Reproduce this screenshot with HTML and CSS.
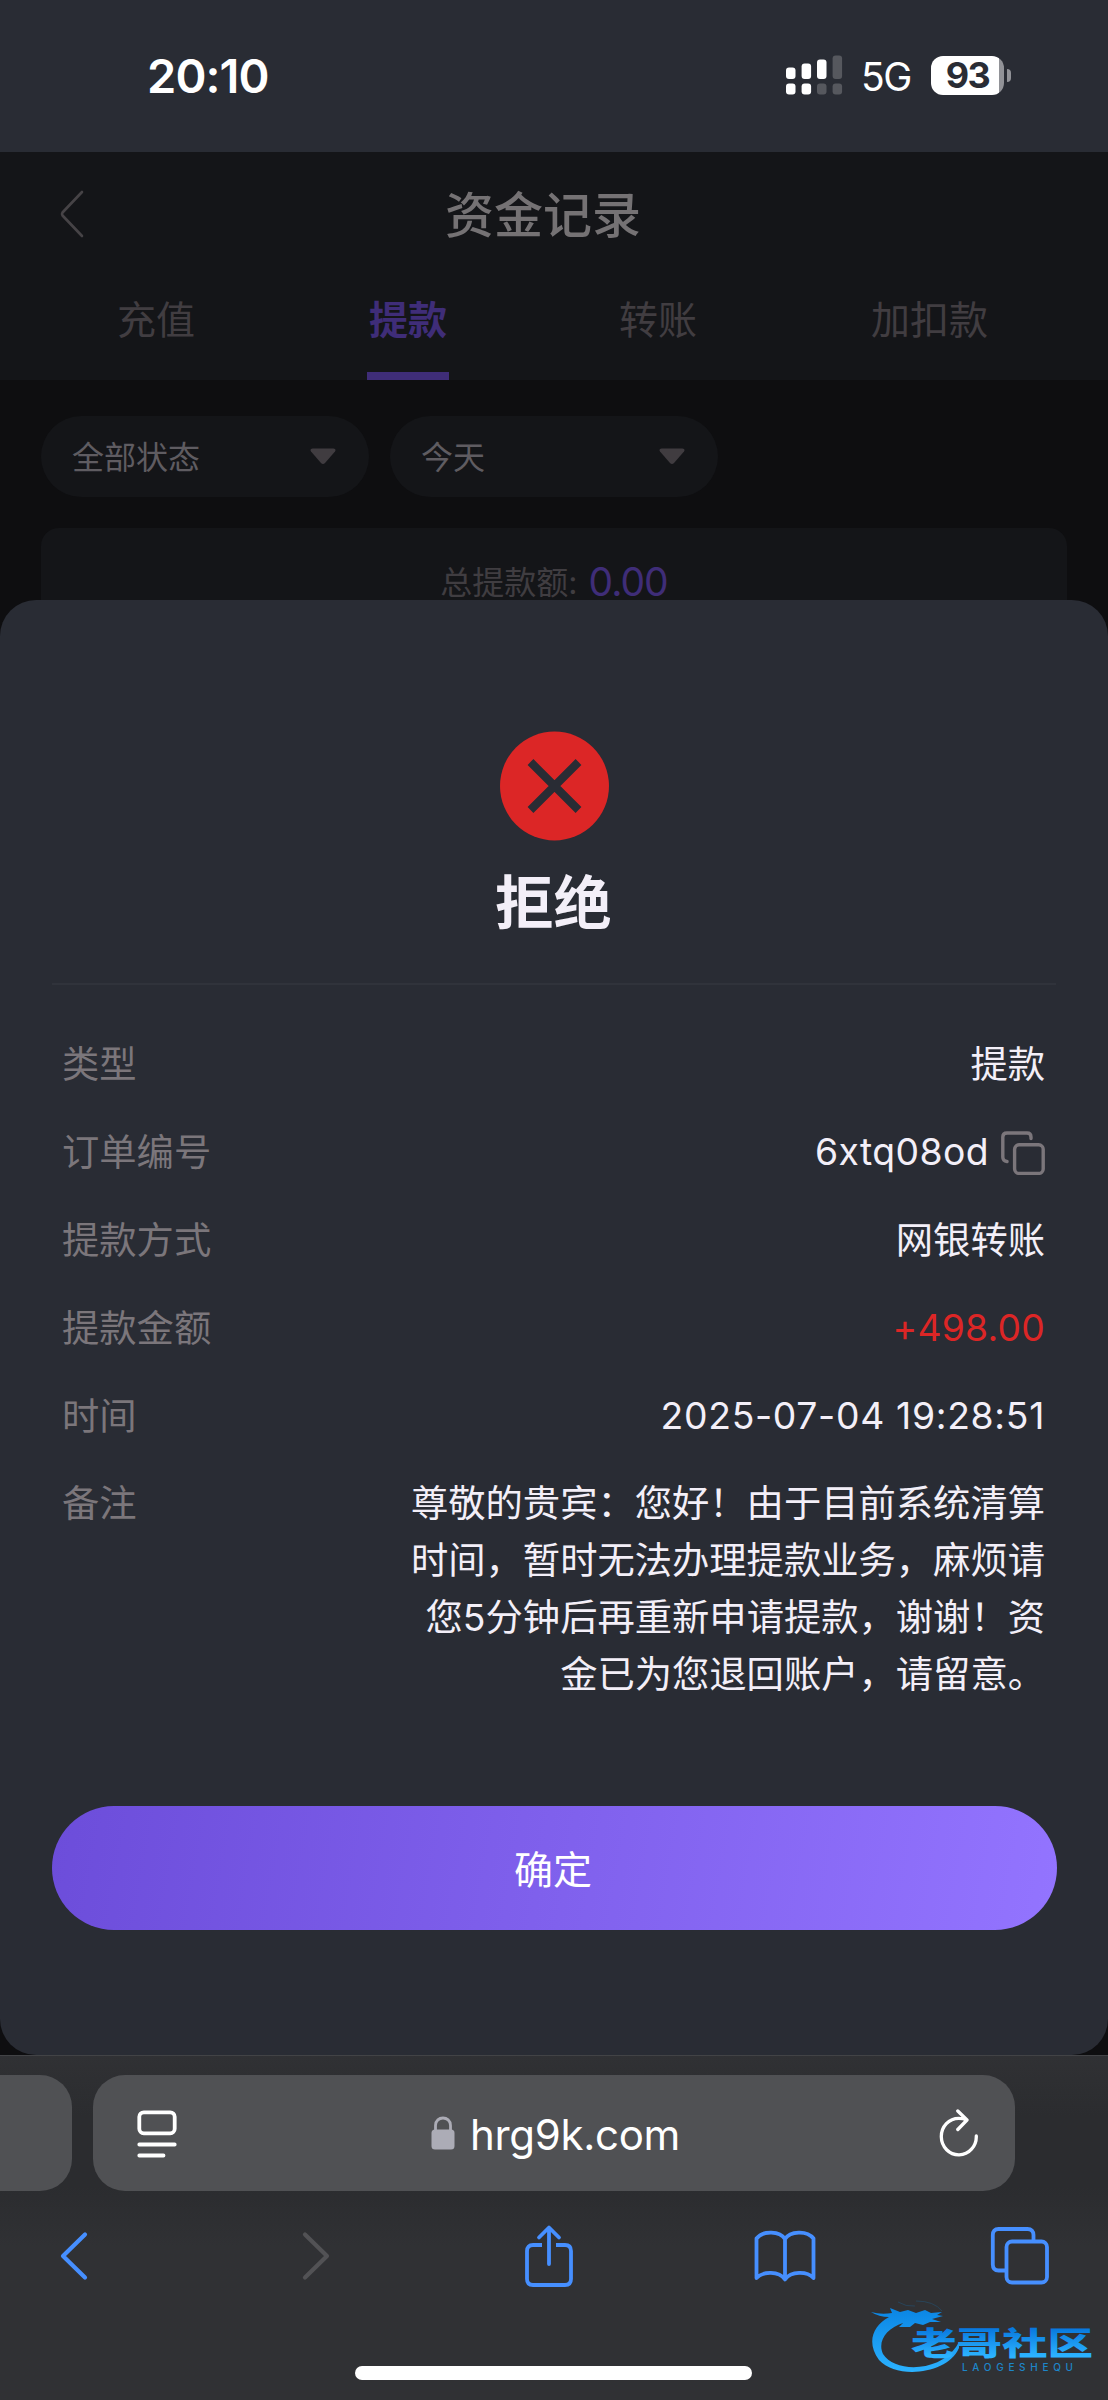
FILE: index.html
```html
<!DOCTYPE html>
<html lang="zh-CN">
<head>
<meta charset="utf-8">
<title>资金记录</title>
<link rel="stylesheet" href="styles.css">
</head>
<body>
<div class="phone">
  <header class="status">
    <span class="status-time">20:10</span>
    <div class="status-right">
      <svg class="signal" width="57" height="40" viewBox="0 0 57 40" fill="#fff">
        <rect x="0" y="12.500" width="9.500" height="11.500" rx="3"/>
        <rect x="15.600" y="8.500" width="9.500" height="15.500" rx="3"/>
        <rect x="31" y="4.500" width="9.500" height="19.500" rx="3"/>
        <rect x="46.600" y="0.500" width="9.500" height="23.500" rx="3" fill="#56585e"/>
        <rect x="0" y="28.500" width="9.500" height="11" rx="3"/>
        <rect x="15.600" y="28.500" width="9.500" height="11" rx="3"/>
        <rect x="31" y="28.500" width="9.500" height="11" rx="3" fill="#56585e"/>
        <rect x="46.600" y="28.500" width="9.500" height="11" rx="3" fill="#56585e"/>
      </svg>
      <span class="network">5G</span>
      <div class="battery"><span class="battery-body">93</span><span class="battery-cap"></span></div>
    </div>
  </header>

  <main class="screen">
    <div class="topbar">
      <div class="nav">
        <svg class="nav-back" width="26" height="50" viewBox="0 0 26 50" fill="none" stroke="#464346" stroke-width="2.600" stroke-linecap="round" stroke-linejoin="round"><path d="M23 3 3.500 23.500Q2.500 25 3.500 26.500L23 47"/></svg>
        <h1 class="nav-title">资金记录</h1>
      </div>
      <nav class="tabs">
        <span class="tab">充值</span>
        <span class="tab tab-active">提款</span>
        <span class="tab">转账</span>
        <span class="tab">加扣款</span>
      </nav>
    </div>
    <div class="filters">
      <div class="filter"><span>全部状态</span><svg width="26" height="17" viewBox="0 0 26 17"><path fill="#403c40" d="M2.500 0.500h21q3 .5 1.500 3L15 15q-2 2-4 0L1 3.500Q-.5 1 2.500.5z"/></svg></div>
      <div class="filter"><span>今天</span><svg width="26" height="17" viewBox="0 0 26 17"><path fill="#403c40" d="M2.500 0.500h21q3 .5 1.500 3L15 15q-2 2-4 0L1 3.500Q-.5 1 2.500.5z"/></svg></div>
    </div>
    <div class="summary"><span>总提款额:</span><span class="summary-value">0.00</span></div>

    <section class="sheet">
      <svg class="result-icon" width="110" height="110" viewBox="0 0 110 110"><circle cx="55.500" cy="55" r="54.500" fill="#dc2626"/><path d="M31.500 31 79.500 79M79.500 31 31.500 79" stroke="#292c34" stroke-width="8.200"/></svg>
      <h2 class="result-title">拒绝</h2>
      <dl class="details">
        <div class="row"><dt>类型</dt><dd>提款</dd></div>
        <div class="row"><dt>订单编号</dt><dd class="order"><span class="order-id">6xtq08od</span>
          <svg width="44" height="44" viewBox="0 0 44 44" fill="none" stroke="#7b767b" stroke-width="3.400" stroke-linecap="round"><rect x="13.600" y="13.800" width="28.600" height="28.600" rx="4.500"/><path d="M30 7.500V6q0-4-4-4H6Q1.800 2 1.800 6v20q0 4 4.200 4.500"/></svg></dd></div>
        <div class="row"><dt>提款方式</dt><dd>网银转账</dd></div>
        <div class="row"><dt>提款金额</dt><dd class="amount">+498.00</dd></div>
        <div class="row"><dt>时间</dt><dd class="time">2025-07-04 19:28:51</dd></div>
        <div class="row"><dt>备注</dt><dd class="note">尊敬的贵宾：您好！由于目前系统清算<br>时间，暂时无法办理提款业务，麻烦请<br>您5分钟后再重新申请提款，谢谢！资<br>金已为您退回账户，请留意。</dd></div>
      </dl>
      <button class="confirm">确定</button>
    </section>
  </main>

  <footer class="browser">
    <div class="address-row">
      <div class="address-prev"></div>
      <div class="address">
        <svg class="reader" width="40" height="48" viewBox="0 0 40 48" fill="none" stroke="#fff" stroke-width="3.800" stroke-linecap="round"><rect x="2.300" y="2.300" width="35.400" height="21" rx="4.500"/><path d="M2.300 34.500h35.400M2.300 45.500H26.500"/></svg>
        <div class="host">
          <svg width="24" height="34" viewBox="0 0 24 34"><rect x="0.500" y="13.500" width="23" height="20" rx="3.500" fill="#acacb6"/><path d="M4.500 15V9.500C4.500-.5 19.500-.5 19.500 9.500V15" fill="none" stroke="#acacb6" stroke-width="2.800"/></svg>
          <span class="host-name">hrg9k.com</span>
        </div>
        <svg width="42" height="48" viewBox="0 0 42 48" fill="none" stroke="#fff" stroke-width="3.300" stroke-linecap="round" stroke-linejoin="round"><path d="M38.300 27A17.500 18.300 0 1 1 20.800 9.300Q25 9.300 28.500 10.800M19.800 2 29 11 19.800 20.500"/></svg>
      </div>
    </div>
    <div class="toolbar">
      <svg width="30" height="52" viewBox="0 0 30 52" fill="none" stroke="#468fff" stroke-width="4.200" stroke-linecap="round"  stroke-linejoin="round"><path d="M26 4.500 4 26 26 47.500"/></svg>
      <svg width="30" height="52" viewBox="0 0 30 52" fill="none" stroke="#525255" stroke-width="4.200" stroke-linecap="round" stroke-linejoin="round"><path d="M4 4.500 26 26 4 47.500"/></svg>
      <svg width="50" height="64" viewBox="0 0 50 64" fill="none" stroke="#468fff" stroke-width="3.800" stroke-linecap="round" stroke-linejoin="round"><path d="M25 4V40M15 13.500 25 3.500 35 13.500"/><path stroke-linecap="butt" d="M18 21H9Q3 21 3 27V55Q3 61 9 61H41Q47 61 47 55V27Q47 21 41 21H32"/></svg>
      <svg width="64" height="54" viewBox="0 0 64 54" fill="none" stroke="#468fff" stroke-width="3.800" stroke-linecap="round" stroke-linejoin="round"><path d="M32 10C27 2 10 1 3.500 9.500V49C10 42 26 42 32 50.500C38 42 54 42 60.500 49V9.500C54 1 37 2 32 10V50"/></svg>
      <svg width="60" height="60" viewBox="0 0 60 60" fill="none" stroke="#468fff" stroke-width="3.800"><rect x="16.500" y="15.500" width="40.500" height="41" rx="5.500"/><path d="M43.500 15V9Q43.500 3 37.500 3H8.500Q2.800 3 2.800 9V38.500Q2.800 44.500 8.500 44.500H16"/></svg>
    </div>
    <div class="home-bar"></div>
    <svg class="watermark" width="230" height="84" viewBox="0 0 230 84">
      <defs>
        <linearGradient id="ring" x1="0" y1="0" x2="0" y2="1"><stop offset="0" stop-color="#0a85e4"/><stop offset="1" stop-color="#2bb2ff"/></linearGradient>
        <linearGradient id="word" gradientUnits="userSpaceOnUse" x1="0" y1="32" x2="0" y2="61"><stop offset="0" stop-color="#0675dc"/><stop offset="1" stop-color="#2cb3ff"/></linearGradient>
      </defs>
      <path fill="url(#ring)" d="M0 17Q10 20 21 18L19 13L29 17L37 15L45 18L54 15L60 18L71 17L66 20L72 21L61 24L70 27L59 27L52 30L44 28L39 32L28 32L32 28C16 33 6 46 12 59C24 78 68 77 85 52L88 47V53C77 79 26 85 8 65C-5 47 2 31 18 22Q8 22 0 17Z"/>
      <path fill="none" stroke="#235071" stroke-width="0.600" d="M27 7Q35 12 44 11M45 6Q63 6 71 16"/>
      <text class="mark-name" x="40" y="60" textLength="182" lengthAdjust="spacingAndGlyphs" fill="url(#word)">老哥社区</text>
      <text class="mark-latin" x="91" y="76" textLength="111" fill="#1d86c9">LAOGESHEQU</text>
    </svg>
  </footer>
</div>
</body>
</html>
```
FILE: styles.css
```css
* { box-sizing: border-box; }
body {
  margin: 0;
  background: #0e0e10;
  font-family: Inter, "Noto Sans CJK SC", sans-serif;
}
h1, h2, dl, dd { margin: 0; }
svg { display: block; flex: none; }
.phone { width: 1108px; height: 2400px; display: flex; flex-direction: column; overflow: hidden; }

/* Status bar */
.status {
  height: 152px;
  padding: 0 97px 2px 147px;
  display: flex;
  align-items: center;
  justify-content: space-between;
  background: #292c34;
  color: #fff;
}
.status-time { font-size: 47px; font-weight: 600; letter-spacing: -0.900px; }
.status-right { display: flex; align-items: center; }
.signal { margin-left: -1px; }
.network { margin-left: 18px; width: 70px; font-size: 39px; line-height: 48px; letter-spacing: -1.500px; padding-top: 3px; }
.battery { display: flex; align-items: center; gap: 3px; }
.battery-body {
  width: 73px;
  height: 39px;
  border-radius: 12px;
  background: linear-gradient(90deg, #fff 68px, #919297 68px);
  color: #292c34;
  font-size: 36px;
  font-weight: 700;
  line-height: 38px;
  text-align: center;
  letter-spacing: -1.500px;
}
.battery-cap { width: 4px; height: 13px; border-radius: 0 6px 6px 0; background: #919297; }

/* Page behind the sheet */
.screen { height: 1903px; position: relative; background: #0e0e10; }
.topbar { height: 228px; background: #141518; }
.nav { height: 123px; padding: 0 60px 0 59px; display: flex; align-items: center; }
.nav-title {
  flex: 1;
  padding: 5px 47px 0 0;
  text-align: center;
  font-size: 49px;
  font-weight: 500;
  line-height: 60px;
  color: #757274;
}
.nav-back { width: 26px; }
.tabs { height: 105px; padding: 0 119px 0 117px; display: grid; grid-template-columns: 250px 252px 252px 118px; }
.tab { height: 105px; justify-self: start; font-size: 39px; line-height: 89px; color: #413d41; white-space: nowrap; }
.tab-active { font-weight: 700; color: #3f2d78; border-bottom: 8px solid #3f2d78; padding: 0 2px; }
.filters { padding: 36px 41px 31px; display: flex; gap: 21px; }
.filter {
  width: 328px;
  height: 81px;
  padding: 0 33px 0 31px;
  border-radius: 41px;
  background: #141518;
  display: flex;
  align-items: center;
  justify-content: space-between;
  font-size: 32px;
  color: #5f5c61;
}
.filter span { padding-bottom: 3px; }
.summary {
  margin: 0 41px;
  height: 120px;
  border-radius: 18px;
  background: #141518;
  display: flex;
  justify-content: center;
  gap: 11px;
  padding-top: 30px;
  font-size: 32px;
  line-height: 48px;
  color: #403d41;
}
.summary span:first-child { padding-top: 1px; }
.summary-value { font-size: 39px; color: #3f2d78; letter-spacing: -1px; }

/* Result sheet */
.sheet {
  position: absolute;
  inset: 448px 0 0;
  padding: 131px 51px 0;
  border-radius: 36px;
  background: #292c34;
  display: flex;
  flex-direction: column;
  align-items: center;
  color: #f3eff8;
}
.result-title { margin-top: 19px; padding-right: 1px; font-size: 58.500px; line-height: 86px; font-weight: 700; }
.details {
  width: 1004px;
  margin-top: 37px;
  padding: 52px 11px 0 10px;
  border-top: 2px solid #30333b;
  font-size: 37.300px;
  line-height: 56.700px;
  display: flex;
  flex-direction: column;
  gap: 31.200px;
}
.row { display: flex; justify-content: space-between; }
.row dt { color: #7b767b; }
.row dd { height: max-content; text-align: right; white-space: nowrap; }
.order { display: flex; align-items: center; gap: 12px; letter-spacing: 0.400px; }
.order-id { margin-top: -1px; }
.row .amount, .row .time { margin: -1px 0 1px; }
.amount { color: #dc2626; letter-spacing: 0.200px; }
.time { letter-spacing: 0.680px; }
.confirm {
  width: 1005px;
  height: 124px;
  margin-top: 103px;
  padding: 0 2px 3px 0;
  border: 0;
  border-radius: 62px;
  background: linear-gradient(100deg, #6c4dda, #9374ff);
  color: #fff;
  font: 39px "Noto Sans CJK SC", sans-serif;
}

/* Browser chrome */
.browser {
  height: 345px;
  position: relative;
  border-top: 1px solid #424346;
  background: linear-gradient(#303134, #2b2c2f 60px, #2b2c2f 130px, #303134 190px);
}
.address-row { display: flex; gap: 21px; padding-top: 19px; }
.address-prev { width: 72px; height: 116px; border-radius: 0 32px 32px 0; background: #505154; }
.address {
  width: 922px;
  height: 116px;
  padding: 0 35px 0 44px;
  border-radius: 32px;
  background: #505154;
  display: flex;
  align-items: center;
  justify-content: space-between;
}
.reader { margin-top: 2px; }
.host { display: flex; align-items: center; gap: 15px; margin-right: 4px; font-size: 42px; color: #fff; }
.host-name { padding-top: 2px; letter-spacing: -0.300px; }
.toolbar {
  height: 64px;
  margin-top: 33px;
  padding-left: 59px;
  display: grid;
  grid-template-columns: 242px 223px 229px 237px 60px;
  align-items: center;
}
.home-bar { width: 397px; height: 14px; margin: 78px 0 0 355px; border-radius: 7px; background: #fff; }
.watermark { position: absolute; left: 871px; top: 239px; }
.mark-name { font: 900 32px "Noto Sans CJK SC", sans-serif; }
.mark-latin { font: 500 10px Inter, sans-serif; }
```
